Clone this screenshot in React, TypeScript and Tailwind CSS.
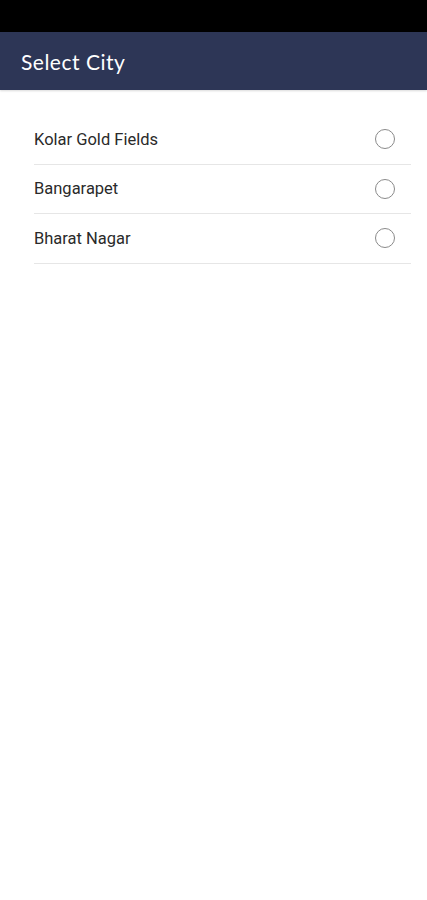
export default function App() {
  const cities = ["Kolar Gold Fields", "Bangarapet", "Bharat Nagar"];
  return (
    <div className="w-[427px] h-[900px] bg-white flex flex-col" style={{ fontFamily: "Roboto, sans-serif" }}>
      <div className="h-[32px] bg-black shrink-0" />
      <div className="h-[58px] bg-[#2d3656] flex items-center px-[21px] shrink-0 shadow-[0_1px_2px_rgba(0,0,0,0.15)]">
        <span className="text-white text-[21px] tracking-[0.5px] pt-[1px]" style={{ fontFamily: "Lato, sans-serif" }}>Select City</span>
      </div>
      <div className="pt-[25px] pl-[34px] pr-[16px] flex flex-col">
        {cities.map((c) => (
          <div key={c} className="h-[49.5px] flex items-center justify-between border-b border-[#e6e6e6]">
            <span className="text-[16.5px] text-[#2a2a2a] pt-[2px]">{c}</span>
            <span className="w-[20px] h-[20px] rounded-full border-[1.5px] border-[#8a8a8a] mr-[16px]" />
          </div>
        ))}
      </div>
    </div>
  );
}
